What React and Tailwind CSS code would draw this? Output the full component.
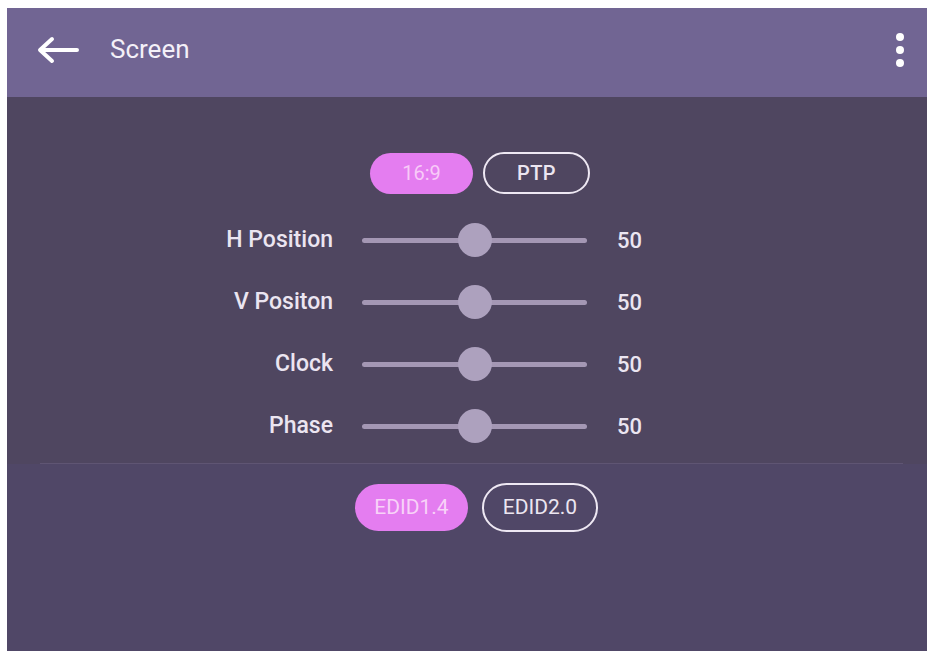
import React from 'react';

const sliders = [
  { label: 'H Position', value: 50 },
  { label: 'V Positon', value: 50 },
  { label: 'Clock', value: 50 },
  { label: 'Phase', value: 50 },
];

const BackArrow = () => (
  <svg width="42" height="28" viewBox="0 0 42 28" fill="none">
    <path
      d="M40 14H4M15 3L3 14l12 11"
      stroke="#ffffff"
      strokeWidth="4"
      strokeLinecap="round"
      strokeLinejoin="round"
    />
  </svg>
);

const MoreDots = () => (
  <div className="flex flex-col items-center gap-[5px]">
    <span className="w-[8px] h-[8px] rounded-full bg-white" />
    <span className="w-[8px] h-[8px] rounded-full bg-white" />
    <span className="w-[8px] h-[8px] rounded-full bg-white" />
  </div>
);

const SliderRow = ({ label, value }) => (
  <div className="h-[62px] flex items-center">
    <div className="w-[326px] text-right text-[23px] font-medium text-[#ebe5f1]">{label}</div>
    <div className="relative ml-[29px] w-[225px] h-[5px] rounded-full bg-[#a497b4]">
      <div
        className="absolute top-1/2 -translate-x-1/2 -translate-y-1/2 w-[34px] h-[34px] rounded-full bg-[#ada1be]"
        style={{ left: `${value}%` }}
      />
    </div>
    <div className="ml-[30px] text-[22px] font-medium text-[#ebe5f1]">{value}</div>
  </div>
);

export default function App() {
  return (
    <div className="w-[931px] h-[651px] bg-white pt-[8px] pl-[7px] pr-[4px] overflow-hidden font-['Roboto',sans-serif]">
      <div className="h-full flex flex-col bg-[#4f4660]">
        {/* Header */}
        <div className="h-[89px] shrink-0 bg-[#716593] flex items-center pb-[6px]">
          <div className="ml-[30px]">
            <BackArrow />
          </div>
          <span className="ml-[31px] text-[26px] text-[#f4f0f8]">Screen</span>
          <div className="flex-1" />
          <div className="mr-[23px]">
            <MoreDots />
          </div>
        </div>

        {/* Aspect buttons */}
        <div className="mt-[55px] pl-[26px] flex justify-center items-center gap-[10px]">
          <button className="w-[103px] h-[41px] rounded-full bg-[#e47df0] text-[20px] text-[#f8caf8]">
            16:9
          </button>
          <button className="w-[107px] h-[42px] rounded-full border-2 border-[#eee8f3] text-[20px] font-medium tracking-wide text-[#ece6f1]">
            PTP
          </button>
        </div>

        {/* Sliders */}
        <div className="mt-[15px] flex flex-col">
          {sliders.map((s) => (
            <SliderRow key={s.label} label={s.label} value={s.value} />
          ))}
        </div>

        <div className="mt-[6px] ml-[33px] mr-[24px] h-px bg-[#5f5573]" />

        {/* EDID */}
        <div className="flex-1 bg-[#504767]">
          <div className="mt-[19px] pl-[19px] flex justify-center items-center gap-[14px]">
            <button className="w-[113px] h-[47px] rounded-full bg-[#e47df0] text-[21px] text-[#f8d2f8]">
              EDID1.4
            </button>
            <button className="w-[116px] h-[49px] rounded-full border-2 border-[#eee8f3] text-[21px] text-[#ece6f1]">
              EDID2.0
            </button>
          </div>
        </div>
      </div>
    </div>
  );
}
